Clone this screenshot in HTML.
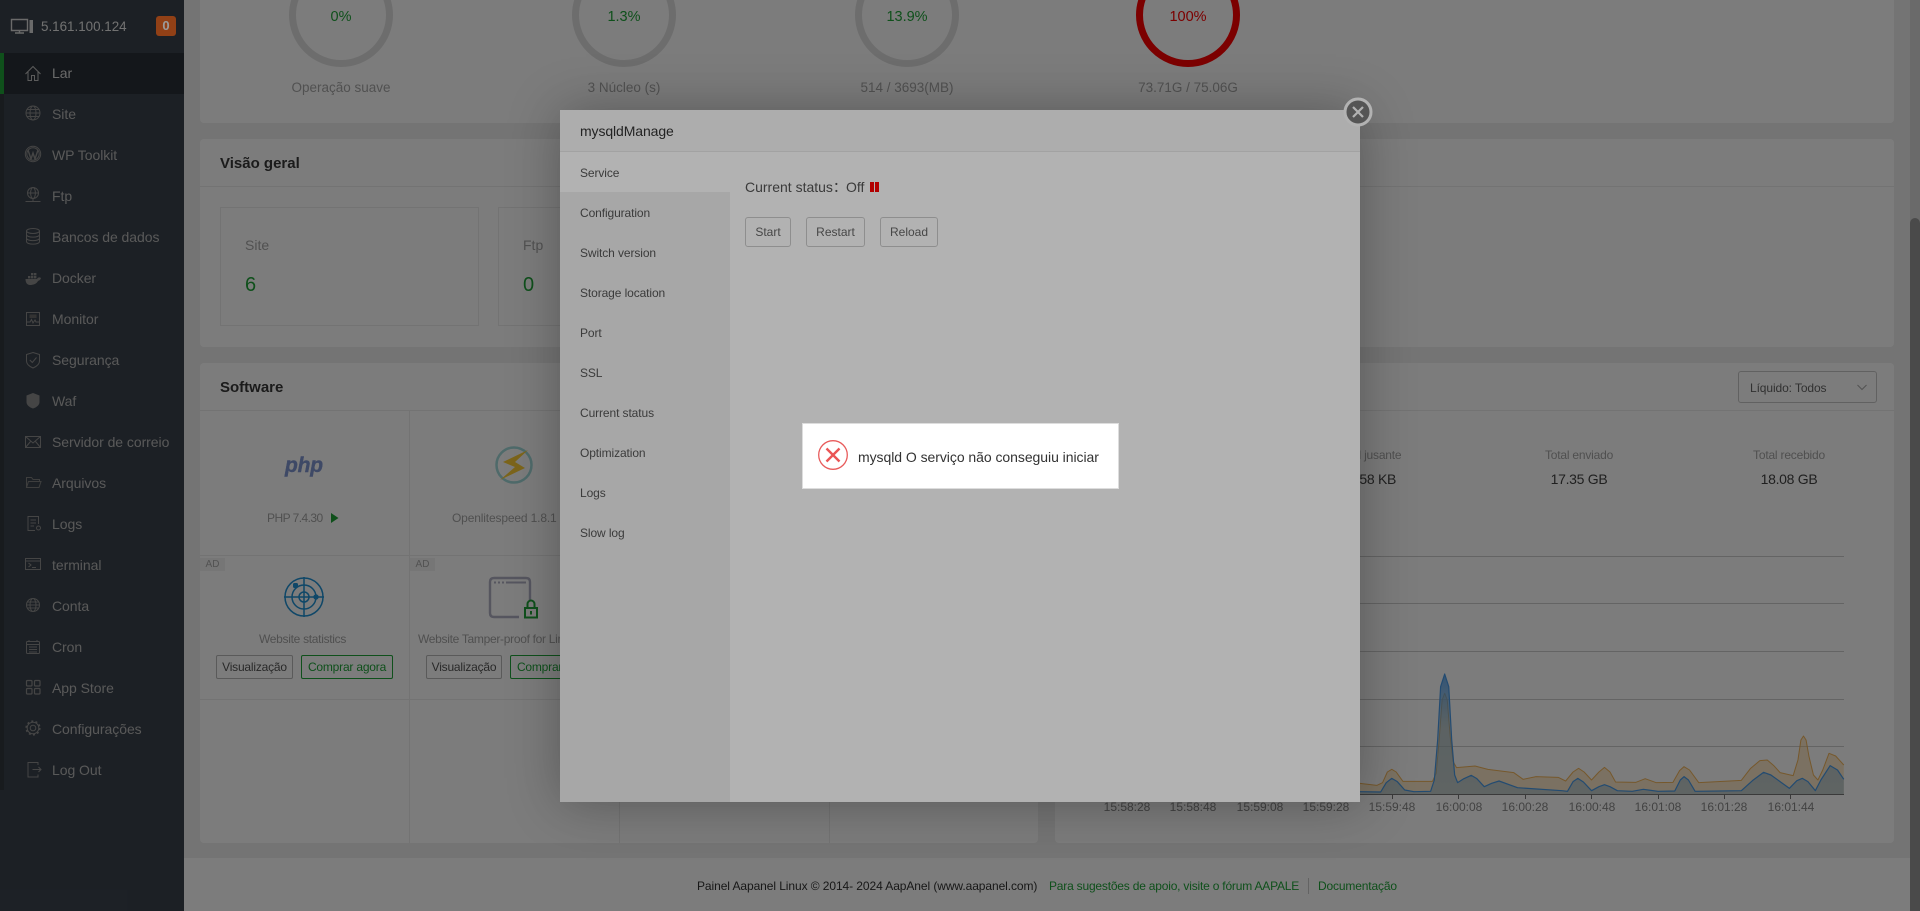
<!DOCTYPE html>
<html lang="pt"><head><meta charset="utf-8"><title>aaPanel</title>
<style>
html,body{margin:0;padding:0;width:1920px;height:911px;overflow:hidden;background:#f0f0f0;font-family:"Liberation Sans","Noto Sans CJK SC",sans-serif;color:#333}
div,span,a{position:absolute;white-space:nowrap}
.t{line-height:16px;font-size:12px}
.c{transform:translateX(-50%)}
#side{left:0;top:0;width:184px;height:911px;background:#3c444d}
#strip{left:0;top:53px;width:4px;height:737px;background:#333840}
.mi{left:52px;font-size:14px;line-height:16px;color:#b8b8b8;letter-spacing:-.05px}
.card{background:#fff;border-radius:4px}
.line{background:#ececec;height:1px}
.vline{background:#ececec;width:1px}
.h{font-weight:bold;font-size:15px;line-height:18px;color:#3a3a3a;left:220px}
.box{border:1px solid #ececec;box-sizing:border-box;background:#fff}
.lab{font-size:14px;line-height:16px;color:#a8a8a8}
.num{font-size:20px;line-height:22px;color:#20a53a}
.sub{font-size:13.5px;line-height:16px;color:#a8a8a8}
.pct{font-size:14.5px;line-height:16px}
.ad{font-size:10px;line-height:13px;height:13px;width:25px;text-align:center;background:#f4f4f4;color:#aaa}
.btn{height:24px;box-sizing:border-box;border:1px solid #bbb;border-radius:2px;font-size:12px;line-height:22px;text-align:center;color:#555;background:#fff;letter-spacing:-.2px}
.buy{border-color:#20a53a;color:#20a53a}
.tick{font-size:12px;line-height:14px;color:#8a8a8a}
#ov1{left:0;top:0;width:1920px;height:911px;background:rgba(0,0,0,.3);z-index:10}
#modal{left:560px;top:110px;width:800px;height:692px;background:#fff;box-shadow:1px 1px 50px rgba(0,0,0,.3);z-index:20}
#ov2{left:0;top:0;width:1920px;height:911px;background:rgba(0,0,0,.3);z-index:30}
#toast{left:802px;top:423px;width:317px;height:66px;box-sizing:border-box;background:#fff;border:1px solid #ddd;z-index:40}
.m{left:20px;font-size:12px;line-height:16px;color:#555;letter-spacing:-.1px}
.mb{height:30px;box-sizing:border-box;top:107px;border:1px solid #ccc;border-radius:3px;font-size:12px;line-height:28px;text-align:center;color:#666;background:#fff}
</style></head><body>

<!-- PAGE -->
<div style="left:184px;top:0;width:1726px;height:858px;background:#f0f0f0"></div>
<div style="left:184px;top:858px;width:1726px;height:53px;background:#fff"></div>
<div style="left:1910px;top:0;width:10px;height:911px;background:#dcdcdc"></div>
<div style="left:1910px;top:218px;width:10px;height:693px;background:#999;border-radius:5px 5px 0 0"></div>

<!-- top card -->
<div class="card" style="left:200px;top:-20px;width:1694px;height:143px"></div>
<!-- overview card -->
<div class="card" style="left:200px;top:139px;width:1694px;height:208px"></div>
<div class="line" style="left:200px;top:186px;width:1694px"></div>
<div class="h" style="top:155px">Visão geral</div>
<div class="box" style="left:220px;top:207px;width:259px;height:119px"></div>
<div class="box" style="left:498px;top:207px;width:259px;height:119px"></div>
<div class="lab" style="left:245px;top:237px">Site</div>
<div class="num" style="left:245px;top:274px">6</div>
<div class="lab" style="left:523px;top:237px">Ftp</div>
<div class="num" style="left:523px;top:274px">0</div>

<!-- software card -->
<div class="card" style="left:200px;top:363px;width:838px;height:480px"></div>
<div class="line" style="left:200px;top:410px;width:838px"></div>
<div class="h" style="top:379px">Software</div>
<div class="line" style="left:200px;top:555px;width:838px"></div>
<div class="line" style="left:200px;top:699px;width:838px"></div>
<div class="vline" style="left:409px;top:411px;height:432px"></div>
<div class="vline" style="left:619px;top:411px;height:432px"></div>
<div class="vline" style="left:829px;top:411px;height:432px"></div>

<div class="c" style="left:304px;top:451px;font-size:21px;line-height:30px;font-weight:bold;font-style:italic;color:#8297d2;letter-spacing:-.2px;-webkit-text-stroke:.4px #8297d2">php</div>
<div class="t" style="left:267px;top:510px;color:#a5a5a5;letter-spacing:-.55px">PHP 7.4.30</div>
<div class="t" style="left:452px;top:510px;color:#a5a5a5;letter-spacing:-.15px">Openlitespeed 1.8.1</div>

<div class="ad" style="left:200px;top:558px">AD</div>
<div class="ad" style="left:410px;top:558px">AD</div>
<div class="t" style="left:259px;top:631px;color:#a5a5a5;letter-spacing:-.3px">Website statistics</div>
<div class="t" style="left:418px;top:631px;color:#a5a5a5;letter-spacing:-.3px">Website Tamper-proof for Linux</div>
<div class="btn" style="left:216px;top:655px;width:77px">Visualização</div>
<div class="btn buy" style="left:301px;top:655px;width:92px">Comprar agora</div>
<div class="btn" style="left:426px;top:655px;width:76px">Visualização</div>
<div class="btn buy" style="left:510px;top:655px;width:92px">Comprar agora</div>

<!-- right card -->
<div class="card" style="left:1055px;top:363px;width:839px;height:480px"></div>
<div class="line" style="left:1055px;top:410px;width:839px"></div>
<div style="left:1738px;top:371px;width:139px;height:32px;box-sizing:border-box;border:1px solid #c8c8c8;border-radius:3px;background:#fff"></div>
<div class="t" style="left:1750px;top:380px;color:#666;letter-spacing:-.1px">Líquido: Todos</div>
<div class="t c" style="left:1369px;top:447px;color:#a5a5a5;letter-spacing:-.2px">Total jusante</div>
<div class="c" style="left:1369px;top:471px;font-size:14px;line-height:16px;color:#444;letter-spacing:-.3px">11.58 KB</div>
<div class="t c" style="left:1579px;top:447px;color:#a5a5a5;letter-spacing:-.2px">Total enviado</div>
<div class="c" style="left:1579px;top:471px;font-size:14px;line-height:16px;color:#444;letter-spacing:-.3px">17.35 GB</div>
<div class="t c" style="left:1789px;top:447px;color:#a5a5a5;letter-spacing:-.2px">Total recebido</div>
<div class="c" style="left:1789px;top:471px;font-size:14px;line-height:16px;color:#444;letter-spacing:-.3px">18.08 GB</div>

<!-- ticks -->
<span class="tick c" style="left:1127px;top:800px">15:58:28</span>
<span class="tick c" style="left:1193px;top:800px">15:58:48</span>
<span class="tick c" style="left:1260px;top:800px">15:59:08</span>
<span class="tick c" style="left:1326px;top:800px">15:59:28</span>
<span class="tick c" style="left:1392px;top:800px">15:59:48</span>
<span class="tick c" style="left:1459px;top:800px">16:00:08</span>
<span class="tick c" style="left:1525px;top:800px">16:00:28</span>
<span class="tick c" style="left:1592px;top:800px">16:00:48</span>
<span class="tick c" style="left:1658px;top:800px">16:01:08</span>
<span class="tick c" style="left:1724px;top:800px">16:01:28</span>
<span class="tick c" style="left:1791px;top:800px">16:01:44</span>

<!-- decor svg -->
<svg style="position:absolute;left:0;top:0" width="1920" height="911" viewBox="0 0 1920 911" fill="none">
 <!-- rings -->
 <circle cx="341" cy="15" r="48.5" stroke="#e0e0e0" stroke-width="7"/>
 <circle cx="624" cy="15" r="48.5" stroke="#e0e0e0" stroke-width="7"/>
 <circle cx="907" cy="15" r="48.5" stroke="#e0e0e0" stroke-width="7"/>
 <circle cx="1188" cy="15" r="48.5" stroke="#ff0000" stroke-width="7"/>
 <!-- play -->
 <path d="M331 513 L338.5 518 L331 523Z" fill="#20a53a"/>
 <path d="M566 513 L573 518 L566 523Z" fill="#20a53a"/>
 <!-- litespeed -->
 <circle cx="514" cy="465" r="17.5" stroke="#a2dcdc" stroke-width="2.5"/>
 <path d="M528 450 L503 462 L515 467 L500 480 L525 468 L515 462Z" fill="#ffd038"/>
 <!-- radar -->
 <g stroke="#2093d6" stroke-width="1.5">
  <circle cx="304" cy="597" r="19"/><circle cx="304" cy="597" r="12"/><circle cx="304" cy="597" r="5"/>
  <path d="M304 577V617M284 597H324"/>
 </g>
 <rect x="293" y="583" width="5" height="5" rx="1.5" fill="#2093d6"/><circle cx="316" cy="597" r="2.7" fill="#2093d6"/>
 <!-- window lock -->
 <path d="M530 600V582Q530 578 526 578H494Q490 578 490 582V613Q490 617 494 617H519" stroke="#b0b0c4" stroke-width="2.4"/>
 <path d="M494 582.5h2M498 582.5h2M502 582.5h2M506 582.5h20" stroke="#b0b0c4" stroke-width="2"/>
 <rect x="525" y="608" width="12" height="9.5" stroke="#20a53a" stroke-width="2"/>
 <path d="M527.5 608V604a3.5 3.5 0 0 1 7 0V608" stroke="#20a53a" stroke-width="2"/>
 <rect x="530" y="611" width="2" height="3.5" fill="#20a53a"/>
 <!-- chevron -->
 <path d="M1857.5 385L1862 389.5L1866.5 385" stroke="#aaa" stroke-width="1"/>
 <!-- grid -->
 <g stroke="#cfcfcf" stroke-width="1">
  <path d="M1100 556.5H1844M1100 603.5H1844M1100 651.5H1844M1100 699.5H1844M1100 746.5H1844"/>
 </g>
 <defs><linearGradient id="bl" x1="0" y1="0" x2="0" y2="1"><stop offset="0" stop-color="#4f9fec" stop-opacity=".85"/><stop offset=".45" stop-color="#6ea4d0" stop-opacity=".45"/><stop offset="1" stop-color="#6ea4d0" stop-opacity=".4"/></linearGradient></defs>
 <svg x="1340" y="340" width="580" height="500" viewBox="0 0 1568 1500" preserveAspectRatio="none">
  <path d="M-100 1330 L54 1330 L100 1336 L115 1328 L128 1296 L140 1288 L152 1296 L170 1324 L250 1324 L260 1300 L268 1200 L276 1080 L283 1060 L290 1080 L298 1190 L306 1265 L315 1283 L365 1278 L400 1288 L470 1298 L495 1318 L530 1310 L590 1312 L610 1323 L630 1296 L645 1285 L660 1296 L680 1320 L700 1296 L715 1282 L730 1296 L745 1326 L800 1327 L825 1316 L855 1328 L900 1327 L918 1292 L930 1280 L945 1290 L970 1328 L1085 1321 L1110 1285 L1135 1262 L1155 1260 L1172 1276 L1190 1298 L1225 1307 L1238 1260 L1246 1200 L1253 1188 L1260 1200 L1268 1250 L1280 1305 L1292 1320 L1305 1290 L1322 1240 L1340 1248 L1362 1275 V1363 H-100Z" fill="#f7b851" fill-opacity=".3"/>
  <path d="M-100 1330 L54 1330 L100 1336 L115 1328 L128 1296 L140 1288 L152 1296 L170 1324 L250 1324 L260 1300 L268 1200 L276 1080 L283 1060 L290 1080 L298 1190 L306 1265 L315 1283 L365 1278 L400 1288 L470 1298 L495 1318 L530 1310 L590 1312 L610 1323 L630 1296 L645 1285 L660 1296 L680 1320 L700 1296 L715 1282 L730 1296 L745 1326 L800 1327 L825 1316 L855 1328 L900 1327 L918 1292 L930 1280 L945 1290 L970 1328 L1085 1321 L1110 1285 L1135 1262 L1155 1260 L1172 1276 L1190 1298 L1225 1307 L1238 1260 L1246 1200 L1253 1188 L1260 1200 L1268 1250 L1280 1305 L1292 1320 L1305 1290 L1322 1240 L1340 1248 L1362 1275" stroke="#f0a63a" stroke-opacity=".8" stroke-width="1" vector-effect="non-scaling-stroke" stroke-linejoin="round"/>
  <path d="M-100 1355 L54 1355 L110 1356 L125 1328 L140 1315 L155 1325 L175 1350 L200 1355 L245 1354 L255 1320 L264 1200 L272 1040 L283 1002 L294 1040 L302 1200 L310 1305 L318 1328 L335 1316 L355 1306 L370 1316 L390 1340 L410 1330 L430 1323 L480 1343 L600 1352 L615 1354 L630 1325 L643 1315 L658 1326 L680 1352 L700 1340 L715 1334 L730 1340 L750 1352 L790 1354 L820 1348 L860 1354 L905 1353 L920 1320 L930 1310 L942 1320 L960 1354 L1085 1352 L1115 1322 L1145 1297 L1165 1305 L1215 1345 L1235 1322 L1250 1315 L1265 1325 L1285 1352 L1300 1320 L1325 1277 L1345 1290 L1362 1318 V1363 H-100Z" fill="url(#bl)"/>
  <path d="M-100 1355 L54 1355 L110 1356 L125 1328 L140 1315 L155 1325 L175 1350 L200 1355 L245 1354 L255 1320 L264 1200 L272 1040 L283 1002 L294 1040 L302 1200 L310 1305 L318 1328 L335 1316 L355 1306 L370 1316 L390 1340 L410 1330 L430 1323 L480 1343 L600 1352 L615 1354 L630 1325 L643 1315 L658 1326 L680 1352 L700 1340 L715 1334 L730 1340 L750 1352 L790 1354 L820 1348 L860 1354 L905 1353 L920 1320 L930 1310 L942 1320 L960 1354 L1085 1352 L1115 1322 L1145 1297 L1165 1305 L1215 1345 L1235 1322 L1250 1315 L1265 1325 L1285 1352 L1300 1320 L1325 1277 L1345 1290 L1362 1318" stroke="#4a9be8" stroke-width="1.2" vector-effect="non-scaling-stroke" stroke-linejoin="round"/>
 </svg>
 <path d="M1100 794.5H1844" stroke="#777" stroke-width="1"/>
 <path d="M1126.5 794V799M1192.5 794V799M1259.5 794V799M1325.5 794V799M1392.5 794V799M1458.5 794V799M1525.5 794V799M1591.5 794V799M1658.5 794V799M1724.5 794V799M1790.5 794V799" stroke="#777" stroke-width="1"/>
</svg>
<!-- ring labels -->
<div class="pct c" style="left:341px;top:9px;color:#20a53a">0%</div>
<div class="pct c" style="left:624px;top:9px;color:#20a53a">1.3%</div>
<div class="pct c" style="left:907px;top:9px;color:#20a53a">13.9%</div>
<div class="pct c" style="left:1188px;top:9px;color:#ff0000">100%</div>
<div class="sub c" style="left:341px;top:80px">Operação suave</div>
<div class="sub c" style="left:624px;top:80px">3 Núcleo (s)</div>
<div class="sub c" style="left:907px;top:80px">514 / 3693(MB)</div>
<div class="sub c" style="left:1188px;top:80px">73.71G / 75.06G</div>

<!-- footer -->
<div class="t" style="left:697px;top:878px;letter-spacing:-.08px;color:#333">Painel Aapanel Linux © 2014- 2024 AapAnel (www.aapanel.com)</div>
<div class="t" style="left:1049px;top:878px;letter-spacing:-.2px;color:#20a53a">Para sugestões de apoio, visite o fórum AAPALE</div>
<div style="left:1308px;top:878px;width:1px;height:16px;background:#ccc"></div>
<div class="t" style="left:1318px;top:878px;letter-spacing:-.15px;color:#20a53a">Documentação</div>

<!-- SIDEBAR -->
<div id="side"></div>
<div id="strip"></div>
<div style="left:0;top:53px;width:184px;height:41px;background:#2c3138"></div>
<div style="left:0;top:53px;width:4px;height:41px;background:#20a53a"></div>
<svg style="position:absolute;left:0;top:0" width="184" height="800" viewBox="0 0 184 800" fill="none" stroke="#909090" stroke-width="1">
 <!-- header monitor -->
 <path d="M11.5 19.5H27.5V30.5H11.5ZM15 33H24M19.5 30.5V33" stroke="#dadada" stroke-width="1.4"/>
 <rect x="29.5" y="20" width="3.5" height="13" fill="#dadada" stroke="none"/>
 <!-- home -->
 <path d="M25.5 74L33 66.5L40.5 74M28 72V80.5H31.5V75.5H34.5V80.5H38V72" stroke="#bdbdbd"/>
 <!-- globe site -->
 <g><circle cx="33" cy="113" r="7"/><ellipse cx="33" cy="113" rx="3" ry="7"/><path d="M26 113H40M27 109.5H39M27 116.5H39"/></g>
 <!-- wp -->
 <g><circle cx="33" cy="154" r="7.7"/><circle cx="33" cy="154" r="6.2"/><path d="M28 150L31 159L33 153L35 159L38 150" stroke-width="1.4"/></g>
 <!-- ftp -->
 <g><circle cx="33" cy="193" r="5.5"/><ellipse cx="33" cy="193" rx="2.4" ry="5.5"/><path d="M27.5 193H38.5M33 198.5V201M25.5 201.5H40.5"/></g>
 <!-- db -->
 <g><ellipse cx="33" cy="231" rx="6.5" ry="2.5"/><path d="M26.5 231V241.5C26.5 245 39.5 245 39.5 241.5V231M26.5 234.5C26.5 238 39.5 238 39.5 234.5M26.5 238C26.5 241.5 39.5 241.5 39.5 238"/></g>
 <!-- docker -->
 <g fill="#909090" stroke="none"><rect x="28" y="276" width="2.4" height="2.4"/><rect x="31" y="276" width="2.4" height="2.4"/><rect x="34" y="276" width="2.4" height="2.4"/><rect x="31" y="273" width="2.4" height="2.4"/><rect x="34" y="273" width="2.4" height="2.4"/><path d="M25.5 279H37C38 277 39.5 277 41 278C40.5 280 39 280.5 38 281C36.5 284 33 285 30 285C27 285 25.5 282.5 25.5 279Z"/></g>
 <!-- monitor -->
 <g><rect x="26.5" y="312.5" width="13" height="13"/><path d="M27 322H30L31.5 319.5L33 323L35 320L36 322H39"/><rect x="29.5" y="314.5" width="7" height="3.5" fill="#6a6a6a" stroke="none"/></g>
 <!-- shield -->
 <path d="M33 352.5L39.5 354.5V361C39.5 364 36.5 366.5 33 368C29.5 366.5 26.5 364 26.5 361V354.5ZM29.8 360L32.3 362.5L36.5 357.5"/>
 <!-- waf -->
 <path d="M33 393L39.5 395.5V402C39.5 405 36.5 407.5 33 408.5C29.5 407.5 26.5 405 26.5 402V395.5Z" fill="#909090" stroke="none"/>
 <!-- mail -->
 <path d="M25.5 436.5H40.5V447.5H25.5ZM25.5 436.5L33 443L40.5 436.5M25.5 447.5L30.5 441.5M40.5 447.5L35.5 441.5"/>
 <!-- folder -->
 <path d="M26.5 487.5V477.5H31.5L33 479.5H39.5V481.5M26.5 487.5L28.5 481.5H41L39 487.5Z" stroke="#808080"/>
 <!-- logs -->
 <path d="M38.5 524V516.5H28V530.5H35M30.5 520H36M30.5 523H36M30.5 526H34"/><circle cx="38.5" cy="528" r="2"/>
 <!-- terminal -->
 <g><rect x="25.5" y="558.5" width="15" height="11"/><path d="M25.5 561H40.5M28.5 563L31 565L28.5 567M32 567.5H36"/></g>
 <!-- conta -->
 <g><circle cx="33" cy="605" r="6.5"/><ellipse cx="33" cy="605" rx="3" ry="6.5"/><path d="M26.5 605H39.5M27 602H39M27 608H39"/></g>
 <!-- cron -->
 <g><rect x="26.5" y="641.5" width="13" height="12" rx="1"/><path d="M29 640V642M37 640V642M26.5 644.5H39.5M29 647h8M29 649.5h8M29 652h8" /></g>
 <!-- app store -->
 <g stroke-width="1.2"><rect x="26.5" y="680.5" width="5.5" height="5.5" rx="1"/><rect x="34.5" y="680.5" width="5.5" height="5.5" rx="1"/><rect x="26.5" y="688.5" width="5.5" height="5.5" rx="1"/><rect x="34.5" y="688.5" width="5.5" height="5.5" rx="1"/></g>
 <!-- gear -->
 <g><circle cx="33" cy="728" r="2.8"/><circle cx="33" cy="728" r="5.8"/><circle cx="33" cy="728" r="6.8" stroke-dasharray="2 2.3" stroke-width="1.6"/></g>
 <!-- logout -->
 <path d="M38 765V762.5H28V777H38V774.5M32.5 769.5H41M38.5 767L41 769.5L38.5 772"/>
</svg>
<div style="left:41px;top:19px;font-size:13.4px;line-height:16px;color:#e8e8e8">5.161.100.124</div>
<div style="left:156px;top:16px;width:20px;height:20px;border-radius:3px;background:#d05c20;color:#dfdfdf;font-size:13px;font-weight:bold;line-height:20px;text-align:center;z-index:15">0</div>
<div class="mi" style="top:65px;color:#dcdcdc">Lar</div>
<div class="mi" style="top:106px">Site</div>
<div class="mi" style="top:147px">WP Toolkit</div>
<div class="mi" style="top:188px">Ftp</div>
<div class="mi" style="top:229px">Bancos de dados</div>
<div class="mi" style="top:270px">Docker</div>
<div class="mi" style="top:311px">Monitor</div>
<div class="mi" style="top:352px">Segurança</div>
<div class="mi" style="top:393px">Waf</div>
<div class="mi" style="top:434px">Servidor de correio</div>
<div class="mi" style="top:475px">Arquivos</div>
<div class="mi" style="top:516px">Logs</div>
<div class="mi" style="top:557px">terminal</div>
<div class="mi" style="top:598px">Conta</div>
<div class="mi" style="top:639px">Cron</div>
<div class="mi" style="top:680px">App Store</div>
<div class="mi" style="top:721px">Configurações</div>
<div class="mi" style="top:762px">Log Out</div>

<div id="ov1"></div>

<!-- MODAL -->
<div id="modal">
 <div style="left:0;top:0;width:800px;height:42px;background:#f8f8f8;border-bottom:1px solid #e8e8e8;box-sizing:border-box"></div>
 <div style="left:20px;top:13px;font-size:14px;line-height:16px;color:#333;letter-spacing:-.1px">mysqldManage</div>
 <div style="left:0;top:42px;width:170px;height:650px;background:#f0f0f0"></div>
 <div style="left:0;top:42px;width:170px;height:40px;background:#fff"></div>
 <div class="m" style="top:55px">Service</div>
 <div class="m" style="top:95px">Configuration</div>
 <div class="m" style="top:135px">Switch version</div>
 <div class="m" style="top:175px">Storage location</div>
 <div class="m" style="top:215px">Port</div>
 <div class="m" style="top:255px">SSL</div>
 <div class="m" style="top:295px">Current status</div>
 <div class="m" style="top:335px">Optimization</div>
 <div class="m" style="top:375px">Logs</div>
 <div class="m" style="top:415px">Slow log</div>
 <div style="left:185px;top:69px;font-size:14px;line-height:16px;color:#555">Current status：</div>
 <div style="left:286px;top:69px;font-size:14px;line-height:16px;color:#555">Off</div>
 <div style="left:310px;top:72px;width:4px;height:10px;background:#f00"></div>
 <div style="left:315px;top:72px;width:4px;height:10px;background:#f00"></div>
 <div class="mb" style="left:185px;width:46px">Start</div>
 <div class="mb" style="left:246px;width:59px">Restart</div>
 <div class="mb" style="left:320px;width:58px">Reload</div>
 <svg style="position:absolute;left:783px;top:-13px" width="30" height="30" viewBox="0 0 30 30" fill="none">
  <circle cx="15" cy="15" r="13" fill="#7a7a7a" stroke="#fff" stroke-width="3"/>
  <path d="M10 10L20 20M20 10L10 20" stroke="#fff" stroke-width="2.2"/>
 </svg>
</div>

<div id="ov2"></div>

<!-- TOAST -->
<div id="toast">
 <svg style="position:absolute;left:14px;top:15px" width="32" height="32" viewBox="0 0 32 32" fill="none">
  <circle cx="16" cy="16" r="14.3" stroke="#e85c5c" stroke-width="1.3"/>
  <path d="M9.5 9.5L22.5 22.5M22.5 9.5L9.5 22.5" stroke="#ea5555" stroke-width="2.4"/>
 </svg>
 <div style="left:55px;top:25px;font-size:14px;line-height:16px;color:#333;letter-spacing:-.05px">mysqld O serviço não conseguiu iniciar</div>
</div>
</body></html>
